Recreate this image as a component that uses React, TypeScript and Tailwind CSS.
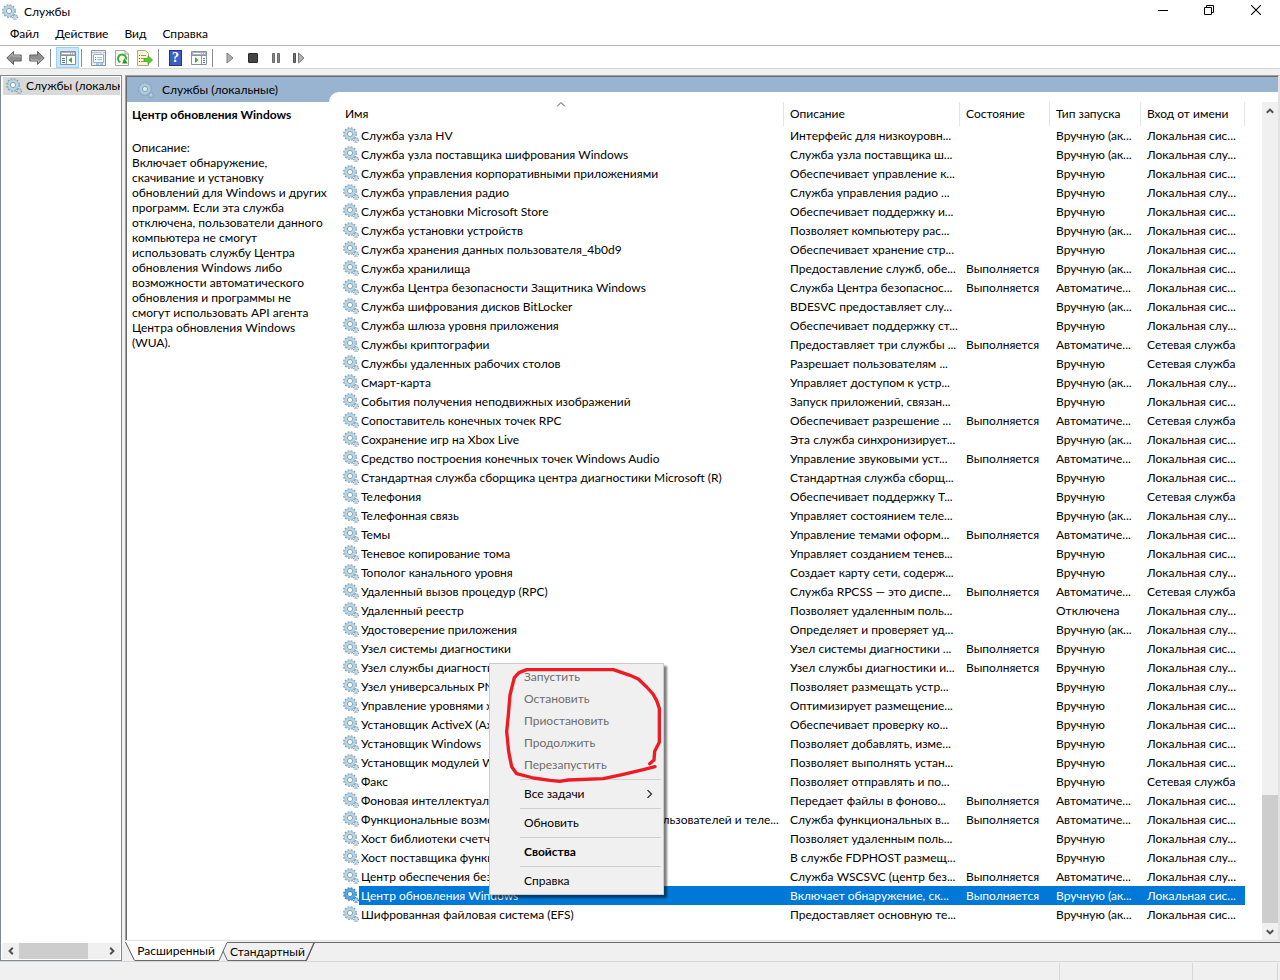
import { useState } from "react";
import clsx from "clsx";

type Service = {
  name: string;
  description: string;
  running?: boolean;
  startup: string;
  logon: string;
};

const MANUAL = "Вручную";
const MANUAL_TRIGGER = "Вручную (ак...";
const AUTO = "Автоматиче...";
const DISABLED = "Отключена";
const SYSTEM = "Локальная сис...";
const LOCAL = "Локальная слу...";
const NETWORK = "Сетевая служба";

const service = (
  name: string,
  description: string,
  startup: string,
  logon: string,
  running = false,
): Service => ({ name, description, startup, logon, running });

const services: Service[] = [
  service("Служба узла HV", "Интерфейс для низкоуровн...", MANUAL_TRIGGER, SYSTEM),
  service("Служба узла поставщика шифрования Windows", "Служба узла поставщика ш...", MANUAL_TRIGGER, LOCAL),
  service("Служба управления корпоративными приложениями", "Обеспечивает управление к...", MANUAL, SYSTEM),
  service("Служба управления радио", "Служба управления радио ...", MANUAL, LOCAL),
  service("Служба установки Microsoft Store", "Обеспечивает поддержку и...", MANUAL, SYSTEM),
  service("Служба установки устройств", "Позволяет компьютеру рас...", MANUAL_TRIGGER, SYSTEM),
  service("Служба хранения данных пользователя_4b0d9", "Обеспечивает хранение стр...", MANUAL, SYSTEM),
  service("Служба хранилища", "Предоставление служб, обе...", MANUAL_TRIGGER, SYSTEM, true),
  service("Служба Центра безопасности Защитника Windows", "Служба Центра безопаснос...", AUTO, SYSTEM, true),
  service("Служба шифрования дисков BitLocker", "BDESVC предоставляет слу...", MANUAL_TRIGGER, SYSTEM),
  service("Служба шлюза уровня приложения", "Обеспечивает поддержку ст...", MANUAL, LOCAL),
  service("Службы криптографии", "Предоставляет три службы ...", AUTO, NETWORK, true),
  service("Службы удаленных рабочих столов", "Разрешает пользователям ...", MANUAL, NETWORK),
  service("Смарт-карта", "Управляет доступом к устр...", MANUAL_TRIGGER, LOCAL),
  service("События получения неподвижных изображений", "Запуск приложений, связан...", MANUAL, SYSTEM),
  service("Сопоставитель конечных точек RPC", "Обеспечивает разрешение ...", AUTO, NETWORK, true),
  service("Сохранение игр на Xbox Live", "Эта служба синхронизирует...", MANUAL_TRIGGER, SYSTEM),
  service("Средство построения конечных точек Windows Audio", "Управление звуковыми уст...", AUTO, SYSTEM, true),
  service("Стандартная служба сборщика центра диагностики Microsoft (R)", "Стандартная служба сборщ...", MANUAL, SYSTEM),
  service("Телефония", "Обеспечивает поддержку T...", MANUAL, NETWORK),
  service("Телефонная связь", "Управляет состоянием теле...", MANUAL_TRIGGER, LOCAL),
  service("Темы", "Управление темами оформ...", AUTO, SYSTEM, true),
  service("Теневое копирование тома", "Управляет созданием тенев...", MANUAL, SYSTEM),
  service("Тополог канального уровня", "Создает карту сети, содерж...", MANUAL, LOCAL),
  service("Удаленный вызов процедур (RPC)", "Служба RPCSS — это диспе...", AUTO, NETWORK, true),
  service("Удаленный реестр", "Позволяет удаленным поль...", DISABLED, LOCAL),
  service("Удостоверение приложения", "Определяет и проверяет уд...", MANUAL_TRIGGER, LOCAL),
  service("Узел системы диагностики", "Узел системы диагностики ...", MANUAL, SYSTEM, true),
  service("Узел службы диагностики", "Узел службы диагностики и...", MANUAL, LOCAL, true),
  service("Узел универсальных PNP-устройств", "Позволяет размещать устр...", MANUAL, LOCAL),
  service("Управление уровнями хранилища", "Оптимизирует размещение...", MANUAL, SYSTEM),
  service("Установщик ActiveX (AxInstSV)", "Обеспечивает проверку ко...", MANUAL, SYSTEM),
  service("Установщик Windows", "Позволяет добавлять, изме...", MANUAL, SYSTEM),
  service("Установщик модулей Windows", "Позволяет выполнять устан...", MANUAL, SYSTEM),
  service("Факс", "Позволяет отправлять и по...", MANUAL, NETWORK),
  service("Фоновая интеллектуальная служба передачи", "Передает файлы в фоново...", AUTO, SYSTEM, true),
  service("Функциональные возможности для подключенных пользователей и теле...", "Служба функциональных в...", AUTO, SYSTEM, true),
  service("Хост библиотеки счетчика производительности", "Позволяет удаленным поль...", MANUAL, LOCAL),
  service("Хост поставщика функции обнаружения", "В службе FDPHOST размещ...", MANUAL, LOCAL),
  service("Центр обеспечения безопасности", "Служба WSCSVC (центр без...", AUTO, LOCAL, true),
  service("Центр обновления Windows", "Включает обнаружение, ск...", MANUAL_TRIGGER, SYSTEM, true),
  service("Шифрованная файловая система (EFS)", "Предоставляет основную те...", MANUAL_TRIGGER, SYSTEM),
];

const description = `Включает обнаружение,
скачивание и установку
обновлений для Windows и других
программ. Если эта служба
отключена, пользователи данного
компьютера не смогут
использовать службу Центра
обновления Windows либо
возможности автоматического
обновления и программы не
смогут использовать API агента
Центра обновления Windows
(WUA).`;

const GearIcon = ({ className, selected }: { className?: string; selected?: boolean }) => (
  <svg viewBox="0 0 16 16" className={clsx("size-4 shrink-0", className)} aria-hidden="true">
    <circle
      cx="7"
      cy="7"
      r="6.1"
      fill="none"
      stroke={selected ? "#2b7fc4" : "#8299a8"}
      strokeWidth="1.6"
      strokeDasharray="1.8 1.394"
    />
    <circle cx="7" cy="7" r="4.2" fill="none" stroke={selected ? "#5aa9e0" : "#b4d8ea"} strokeWidth="3" />
    <circle cx="7" cy="7" r="5.4" fill="none" stroke={selected ? "#3b8fd0" : "#9dbfd2"} strokeWidth="0.7" />
    <circle cx="7" cy="7" r="2.6" fill="#fff" stroke={selected ? "#1f6db0" : "#7d95a5"} strokeWidth="0.9" />
    <circle
      cx="13"
      cy="13"
      r="2.4"
      fill="none"
      stroke={selected ? "#2b7fc4" : "#8299a8"}
      strokeWidth="1.2"
      strokeDasharray="1.1 0.785"
    />
    <circle cx="13" cy="13" r="1.4" fill="#e8f4fa" stroke={selected ? "#5aa9e0" : "#9dc3d8"} strokeWidth="1" />
  </svg>
);

const Chevron = ({ className }: { className?: string }) => (
  <svg viewBox="0 0 8 8" className={clsx("size-2", className)} aria-hidden="true">
    <path d="M0.8 5.8 4 2.6 7.2 5.8" fill="none" stroke="#505050" strokeWidth="2" />
  </svg>
);

const ArrowIcon = ({ className }: { className?: string }) => (
  <svg viewBox="0 0 16 16" className={clsx("size-4", className)} aria-hidden="true">
    <path d="M0.8 8 7.5 1.5V5H15.2V11H7.5V14.5Z" fill="#8f8f8f" stroke="#626262" />
    <path d="M2.5 7.8 6.6 3.8V6H14V7.5" fill="none" stroke="#b9b9b9" />
  </svg>
);

const ConsoleIcon = ({ flipped }: { flipped?: boolean }) => (
  <svg viewBox="0 0 16 14" className="h-3.5 w-4" aria-hidden="true">
    <path d="M0.5 0.5H15.5V13.5H0.5Z" fill="#fff" stroke="#8a939b" />
    <path d="M1 1H15V4H1Z" fill="#aab3bb" />
    <path d="M2 2.5H10M11 2.5H12M13 2.5H14" stroke="#fff" />
    <path d="M1 4.5H15" stroke="#8a939b" />
    {flipped ? (
      <>
        <path d="M10.5 5V13" stroke="#8a939b" />
        <path d="M12 7.5H14M12 9.5H14M12 11.5H14" stroke="#3f7fb5" />
        <path d="M4 6.2V12L7.6 9.1Z" fill="#36b020" />
      </>
    ) : (
      <>
        <path d="M6.5 5V13" stroke="#8a939b" />
        <path d="M2 7.5H5M2 9.5H5M2 11.5H5" stroke="#3f7fb5" />
        <path d="M12 6.2V12L8.4 9.1Z" fill="#36b020" />
      </>
    )}
  </svg>
);

const PropertiesIcon = () => (
  <svg viewBox="0 0 16 16" className="size-4" aria-hidden="true">
    <path d="M0.5 0.5H14.5V15.5H0.5Z" fill="#e9eef2" stroke="#8a949c" />
    <path d="M1 2.5H11M12 2.5H14" stroke="#b3c0ca" />
    <path d="M2.5 4.5H12.5V12.5H2.5Z" fill="#fff" stroke="#a3adb5" />
    <path d="M4 7.5H5M4 9.5H5" stroke="#28a0dc" />
    <path d="M6 7.5H11M6 9.5H11" stroke="#8ccbec" />
    <path d="M5 14H8M9 14H12" stroke="#35aee2" />
  </svg>
);

const RefreshIcon = () => (
  <svg viewBox="0 0 14 16" className="h-4 w-3.5" aria-hidden="true">
    <path d="M0.5 0.5H10L13.5 4V15.5H0.5Z" fill="#fdfdf8" stroke="#a6a69e" />
    <path d="M10 0.5V4H13.5" fill="none" stroke="#a6a69e" />
    <path d="M5.4 12.2A4 4 0 1 1 10.9 9.5" fill="none" stroke="#35b035" strokeWidth="2" />
    <path d="M12.7 13.6H7.2L9.2 8.3Z" fill="#229a22" />
  </svg>
);

const ExportIcon = () => (
  <svg viewBox="0 0 16 16" className="size-4" aria-hidden="true">
    <path d="M0.5 0.5H8.5L11.5 3.5V15.5H0.5Z" fill="#fcf5d4" stroke="#b0a888" />
    <path d="M2 5.5H3M2 8.5H3M2 11.5H3" stroke="#555" />
    <path d="M4 5.5H9M4 8.5H7M4 11.5H8" stroke="#9a9480" />
    <path d="M7 8.5H11V5.8L15.6 10 11 14.2V11.5H7Z" fill="#52cc30" stroke="#35a01c" strokeWidth="0.7" />
  </svg>
);

const HelpIcon = () => (
  <span className="flex h-4 w-[13px] items-center justify-center border border-[#20368c] bg-[#3d5fc4] font-['Liberation_Serif',serif] text-sm font-bold text-white">
    ?
  </span>
);

const PlayIcon = () => (
  <svg viewBox="0 0 8 12" className="h-3 w-2" aria-hidden="true">
    <path d="M1 1 7 6 1 11Z" fill="#b3b3b3" stroke="#7a7a7a" />
  </svg>
);

const StopIcon = () => <span className="size-2.5 rounded-[1px] border border-[#2b2b2b] bg-[#444]" />;

const PauseIcon = () => (
  <svg viewBox="0 0 8 10" className="h-2.5 w-2" aria-hidden="true">
    <path d="M0.5 0.5H2.5V9.5H0.5ZM5.5 0.5H7.5V9.5H5.5Z" fill="#8a8a8a" stroke="#6a6a6a" />
  </svg>
);

const RestartIcon = () => (
  <svg viewBox="0 0 12 12" className="size-3" aria-hidden="true">
    <path d="M0.5 1.5H2.5V10.5H0.5Z" fill="#777" stroke="#4d4d4d" />
    <path d="M5.5 1 11 6 5.5 11Z" fill="#b3b3b3" stroke="#7a7a7a" />
  </svg>
);

const ToolButton: React.FC<{
  label: string;
  active?: boolean;
  children: React.ReactNode;
}> = ({ label, active, children }) => (
  <button
    type="button"
    aria-label={label}
    className={clsx(
      "flex h-[21px] w-[23px] items-center justify-center border",
      active ? "border-[#99d1ff] bg-[#cce8ff]" : "border-transparent",
    )}
  >
    {children}
  </button>
);

const ToolSeparator = () => (
  <div className="flex w-2 pb-px pl-0.5">
    <div className="h-[18px] w-px bg-[#8c8c8c]" />
  </div>
);

const TitleBar = () => (
  <header className="flex h-[23px] items-center justify-between pl-0.5">
    <h1 className="flex items-center gap-1.5">
      <GearIcon />
      Службы
    </h1>
    <div className="flex items-center self-start">
      <button type="button" aria-label="Свернуть" className="flex h-5 w-[46px] items-center justify-center">
        <svg viewBox="0 0 10 10" className="size-2.5">
          <path d="M0 5.5H10" stroke="#000" />
        </svg>
      </button>
      <button type="button" aria-label="Восстановить" className="flex h-5 w-[46px] items-center justify-center">
        <svg viewBox="0 0 10 10" className="size-2.5">
          <path d="M0.5 2.5H7.5V9.5H0.5ZM2.5 2.5V0.5H9.5V7.5H7.5" fill="none" stroke="#000" />
        </svg>
      </button>
      <button type="button" aria-label="Закрыть" className="flex h-5 w-12 items-center justify-center">
        <svg viewBox="0 0 10 10" className="size-2.5">
          <path d="M0 0 10 10M10 0 0 10" stroke="#000" strokeWidth="1.1" />
        </svg>
      </button>
    </div>
  </header>
);

const MenuBar = () => (
  <nav className="flex h-[22px] items-center pl-0.5">
    {["Файл", "Действие", "Вид", "Справка"].map((item) => (
      <button key={item} type="button" className="px-2">
        {item}
      </button>
    ))}
  </nav>
);

const Toolbar = () => (
  <div className="flex h-6 items-end border-y border-t-[#b4b4b4] border-b-[#d5d5d5] pl-0.5">
    <ToolButton label="Назад">
      <ArrowIcon />
    </ToolButton>
    <ToolButton label="Вперед">
      <ArrowIcon className="rotate-180" />
    </ToolButton>
    <ToolSeparator />
    <ToolButton label="Дерево консоли" active>
      <ConsoleIcon />
    </ToolButton>
    <ToolSeparator />
    <ToolButton label="Свойства">
      <PropertiesIcon />
    </ToolButton>
    <ToolButton label="Обновить">
      <RefreshIcon />
    </ToolButton>
    <ToolButton label="Экспортировать список">
      <ExportIcon />
    </ToolButton>
    <ToolSeparator />
    <ToolButton label="Справка">
      <HelpIcon />
    </ToolButton>
    <ToolButton label="Панель действий">
      <ConsoleIcon flipped />
    </ToolButton>
    <ToolSeparator />
    <ToolButton label="Запуск службы">
      <PlayIcon />
    </ToolButton>
    <ToolButton label="Остановка службы">
      <StopIcon />
    </ToolButton>
    <ToolButton label="Приостановка службы">
      <PauseIcon />
    </ToolButton>
    <ToolButton label="Перезапуск службы">
      <RestartIcon />
    </ToolButton>
  </div>
);

const TreePane = () => (
  <aside className="flex w-[122px] shrink-0 flex-col border border-[#828790] bg-white p-px">
    <button
      type="button"
      className="ml-px flex h-[18px] items-center gap-1 overflow-hidden bg-[#d9d9d9] pl-[3px] whitespace-nowrap"
    >
      <GearIcon />
      Службы (локальные)
    </button>
    <div className="mt-auto flex h-4 bg-[#f0f0f0]">
      <button type="button" aria-label="Прокрутить влево" className="flex w-[17px] items-center justify-center">
        <Chevron className="-rotate-90" />
      </button>
      <div className="w-[69px] bg-[#cdcdcd]" />
      <button type="button" aria-label="Прокрутить вправо" className="ml-auto flex w-[17px] items-center justify-center">
        <Chevron className="rotate-90" />
      </button>
    </div>
  </aside>
);

const headers = [
  { title: "Имя", width: "w-[445px]" },
  { title: "Описание", width: "w-[176px]" },
  { title: "Состояние", width: "w-[90px]" },
  { title: "Тип запуска", width: "w-[91px]" },
  { title: "Вход от имени", width: "w-[104px]" },
];

const ServiceTable: React.FC<{
  selected: string;
  onSelect: (name: string) => void;
}> = ({ selected, onSelect }) => (
  <table className="w-[906px] table-fixed border-separate border-spacing-0 text-left whitespace-nowrap">
    <thead>
      <tr className="h-6">
        {headers.map(({ title, width }, i) => (
          <th key={title} className={clsx("relative border-r border-[#e5e5e5] p-0 pl-1.5 font-normal", width)}>
            {title}
            {i === 0 && (
              <svg
                viewBox="0 0 9 5"
                className="absolute top-0 left-1/2 h-[5px] w-[9px] -translate-x-1/2"
                aria-hidden="true"
              >
                <path d="M0.5 4.5 4.5 0.5 8.5 4.5" fill="none" stroke="#505050" />
              </svg>
            )}
          </th>
        ))}
      </tr>
    </thead>
    <tbody>
      {services.map((s) => {
        const isSelected = s.name === selected;
        const cell = clsx("h-[19px] p-0 pl-1.5", isSelected && "bg-[#0078d7] text-white");
        return (
          <tr key={s.name} onClick={() => onSelect(s.name)}>
            <td className="h-[19px] p-0 pl-1">
              <div className="flex h-[19px]">
                <GearIcon className="mt-px" selected={isSelected} />
                <span className={clsx("flex-1 pl-0.5 leading-[19px]", isSelected && "bg-[#0078d7] text-white")}>
                  {s.name}
                </span>
              </div>
            </td>
            <td className={cell}>{s.description}</td>
            <td className={cell}>{s.running && "Выполняется"}</td>
            <td className={cell}>{s.startup}</td>
            <td className={cell}>{s.logon}</td>
          </tr>
        );
      })}
    </tbody>
  </table>
);

const MenuItem: React.FC<{
  disabled?: boolean;
  bold?: boolean;
  submenu?: boolean;
  children: React.ReactNode;
}> = ({ disabled, bold, submenu, children }) => (
  <button
    type="button"
    role="menuitem"
    disabled={disabled}
    className={clsx(
      "flex h-[22px] w-full items-center justify-between pr-2 pl-8 text-left",
      disabled && "text-[#6d6d6d]",
      bold && "font-bold",
    )}
  >
    {children}
    {submenu && (
      <svg viewBox="0 0 8 8" className="size-2" aria-hidden="true">
        <path d="M2.5 0 6.5 4 2.5 8" fill="none" stroke="#222" strokeWidth="1.1" />
      </svg>
    )}
  </button>
);

const MenuSeparator = () => (
  <div className="flex h-[7px] items-center pl-7">
    <div className="h-px flex-1 bg-[#d0d0d0]" />
  </div>
);

const ContextMenu = () => (
  <div
    role="menu"
    className="absolute top-[561px] left-[150px] w-[175px] border border-[#ccc] bg-[#f0f0f0] p-0.5 shadow-[3px_3px_2px_rgba(0,0,0,0.5)]"
  >
    <MenuItem disabled>Запустить</MenuItem>
    <MenuItem disabled>Остановить</MenuItem>
    <MenuItem disabled>Приостановить</MenuItem>
    <MenuItem disabled>Продолжить</MenuItem>
    <MenuItem disabled>Перезапустить</MenuItem>
    <MenuSeparator />
    <MenuItem submenu>Все задачи</MenuItem>
    <MenuSeparator />
    <MenuItem>Обновить</MenuItem>
    <MenuSeparator />
    <MenuItem bold>Свойства</MenuItem>
    <MenuSeparator />
    <MenuItem>Справка</MenuItem>
    {/* hand-drawn marker around the disabled commands */}
    <svg
      viewBox="0 0 525 696"
      className="pointer-events-none absolute -top-px -left-px h-[232px] w-[175px]"
      aria-hidden="true"
    >
      <path
        d="M498 311 463 320 403 334 343 347 238 351 212 355 183 352 133 345 83 332 68 311 59 266 53 206 58 156 63 96 76 44 90 29 113 20H373L423 37 448 48 473 72 492 93 503 113 511 136V238L497 265 495 291 482 302"
        fill="none"
        stroke="#ed1c24"
        strokeWidth="10"
        strokeLinejoin="round"
        strokeLinecap="round"
      />
    </svg>
  </div>
);

const VerticalScrollbar = () => (
  <div className="ml-auto flex w-4 shrink-0 flex-col bg-[#f0f0f0]">
    <button type="button" aria-label="Прокрутить вверх" className="flex h-[17px] items-center justify-center">
      <Chevron />
    </button>
    <div className="mt-auto h-32 bg-[#cdcdcd]" />
    <button type="button" aria-label="Прокрутить вниз" className="flex h-[17px] items-center justify-center">
      <Chevron className="rotate-180" />
    </button>
  </div>
);

const ViewTabs = () => (
  <div className="flex h-5 items-stretch">
    <svg viewBox="0 0 10 20" className="h-5 w-2.5" aria-hidden="true">
      <path d="M0.5 0.5 9.5 19.5H10V0H0.5Z" fill="#fff" />
      <path d="M0.5 1 9.5 19.5" stroke="#555" fill="none" />
    </svg>
    <button type="button" role="tab" aria-selected="true" className="w-[82px] border-b border-[#696969] bg-white pt-px">
      Расширенный
    </button>
    <svg viewBox="0 0 13 20" className="h-5 w-[13px]" aria-hidden="true">
      <path d="M0 0H10V1.5L2 19.5H0Z" fill="#fff" />
      <path d="M0 19.5H2L10 1.5H13M6 10 10.5 19.5H13" stroke="#696969" fill="none" />
    </svg>
    <button type="button" role="tab" aria-selected="false" className="mt-px w-[75px] border-y border-[#696969]">
      Стандартный
    </button>
    <svg viewBox="0 0 10 20" className="h-5 w-2.5" aria-hidden="true">
      <path d="M0 1.5H10M0 19.5H1L9 1.5" stroke="#696969" fill="none" />
      <path d="M0 19.5H1.5L9.5 1.5" stroke="#555" fill="none" />
    </svg>
    <div className="mt-px flex-1 border-t border-[#696969]" />
  </div>
);

const StatusBar = () => (
  <footer className="flex h-5 justify-end border-t border-[#d7d7d7] pt-px pr-0.5">
    <div className="w-[133px] border-l border-[#d7d7d7]" />
    <div className="w-[86px] border-x border-[#d7d7d7]" />
  </footer>
);

export default function App() {
  const [selected, setSelected] = useState("Центр обновления Windows");

  return (
    <div className="flex min-h-screen cursor-default flex-col bg-[#f0f0f0] font-['Lato',sans-serif] text-xs text-black">
      <div className="bg-white">
        <TitleBar />
        <MenuBar />
        <Toolbar />
      </div>
      <main className="mt-1.5 flex flex-1 gap-[3px]">
        <TreePane />
        <div className="flex min-w-0 flex-1 flex-col">
          <section className="flex flex-1 border border-r-2 border-t-[#a0a0a0] border-r-[#e3e3e3] border-b-[#e3e3e3] border-l-[#a0a0a0]">
            <div className="flex min-w-0 flex-1 border-t border-l border-[#696969] bg-[#99b4d1]">
              <div className="flex w-[202px] shrink-0 flex-col">
                <h2 className="flex h-[25px] items-center gap-2 pl-[11px]">
                  <GearIcon className="opacity-70" />
                  Службы (локальные)
                </h2>
                <div className="flex-1 bg-white pt-[5px] pl-[5px] leading-[15px] whitespace-pre">
                  <h3 className="font-bold">Центр обновления Windows</h3>
                  <p className="mt-[18px]">Описание:</p>
                  <p>{description}</p>
                </div>
              </div>
              <div className="flex min-w-0 flex-1 pt-[15px]">
                <div className="flex min-w-0 flex-1 rounded-tl-[10px] bg-white pt-2.5 pl-2.5">
                  <div className="relative min-w-0 pb-4">
                    <ServiceTable selected={selected} onSelect={setSelected} />
                    <ContextMenu />
                  </div>
                  <VerticalScrollbar />
                </div>
              </div>
            </div>
          </section>
          <ViewTabs />
        </div>
      </main>
      <StatusBar />
    </div>
  );
}
